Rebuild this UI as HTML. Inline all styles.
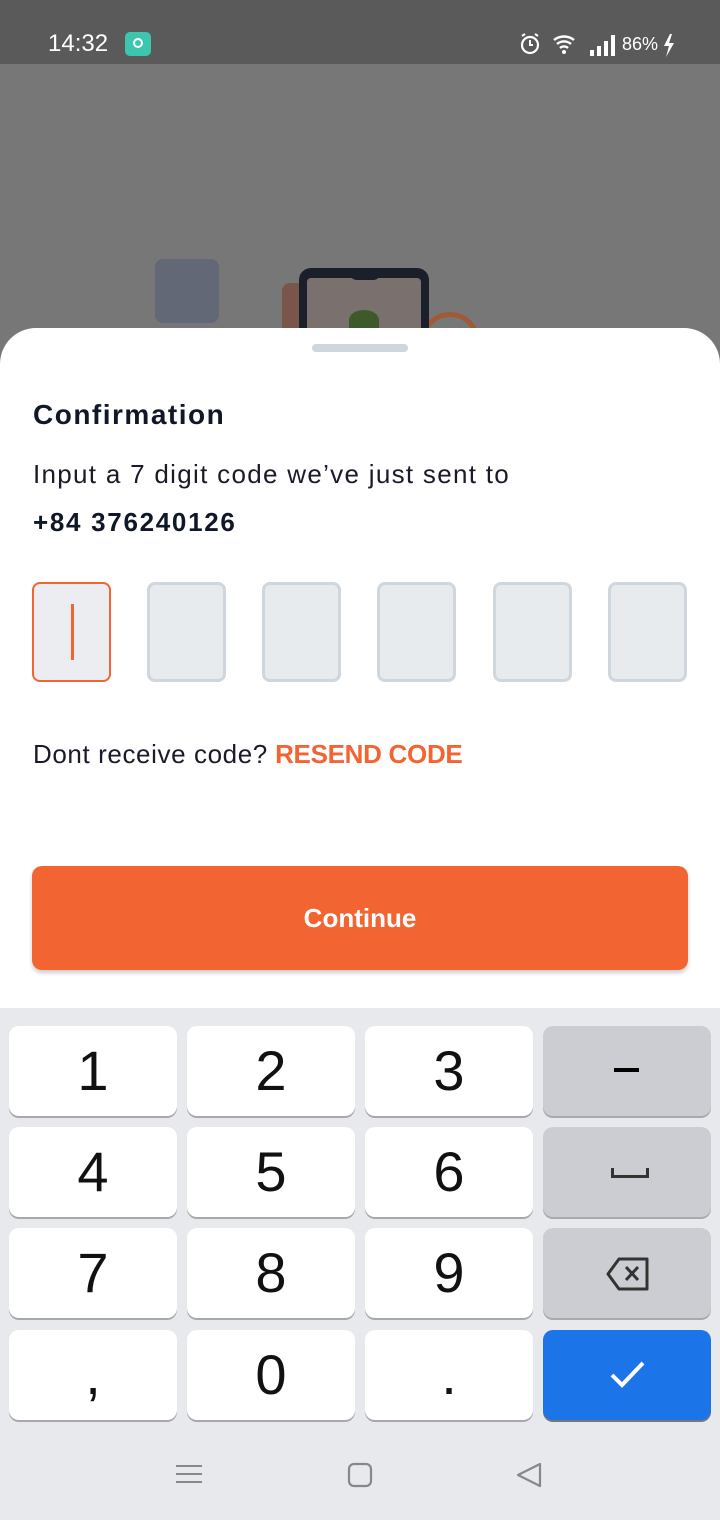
<!DOCTYPE html>
<html><head><meta charset="utf-8"><style>
*{margin:0;padding:0;box-sizing:border-box}
body{width:720px;height:1520px;position:relative;overflow:hidden;font-family:"Liberation Sans",Roboto,sans-serif;background:#777}
.sb{position:absolute;top:0;left:0;width:720px;height:64px;background:#5a5a5a;color:#fff}
.sheet{position:absolute;top:328px;left:0;width:720px;height:700px;background:#fff;border-radius:36px 36px 0 0}
.kb{position:absolute;top:1008px;left:0;width:720px;height:512px;background:#e8e9ed}
.k{position:absolute;width:168px;height:90px;background:#fff;border-radius:10px;box-shadow:0 2px 0 #a8a9ad;font-size:56px;text-align:center;line-height:90px;color:#111}
.g{background:#cbcdd2}
.box{position:absolute;top:582px;width:79px;height:100px;border:3px solid #cfd6de;background:#e8ebee;border-radius:8px}
</style></head><body>
<div class="sb">
<div style="position:absolute;left:48px;top:30px;font-size:24px">14:32</div>
<div style="position:absolute;left:125px;top:32px;width:26px;height:24px;background:#3cc6b0;border-radius:5px"><div style="position:absolute;left:8px;top:6px;width:10px;height:10px;border:2px solid #fff;border-radius:50%"></div></div>
<svg style="position:absolute;left:518px;top:32px" width="170" height="26" viewBox="0 0 170 26">
<circle cx="12" cy="13" r="8" fill="none" stroke="#fff" stroke-width="2.2"/><path d="M12 8v5h3M4 4l3-2M20 4l-3-2" stroke="#fff" stroke-width="2" fill="none"/>
<path d="M36 8a16 16 0 0 1 20 0M39 12a11 11 0 0 1 14 0M42 16a6 6 0 0 1 8 0" stroke="#fff" stroke-width="2.4" fill="none"/><circle cx="46" cy="20" r="2" fill="#fff"/>
<rect x="72" y="18" width="4" height="6" fill="#fff"/><rect x="79" y="14" width="4" height="10" fill="#fff"/><rect x="86" y="9" width="4" height="15" fill="#fff"/><rect x="93" y="3" width="4" height="21" fill="#fff"/>
<text x="104" y="18" font-size="18" fill="#fff" font-family="Liberation Sans">86%</text>
<path d="M152 2l-6 12h5l-3 11 8-14h-5l3-9z" fill="#fff"/></svg>
</div>
<div style="position:absolute;left:155px;top:259px;width:64px;height:64px;background:#626876;border-radius:8px"></div>
<div style="position:absolute;left:282px;top:283px;width:20px;height:50px;background:#78574a;border-radius:8px 0 0 0"></div>
<div style="position:absolute;left:420px;top:312px;width:60px;height:30px;border:5px solid #a05a35;border-radius:30px 30px 0 0;border-bottom:none"></div>
<div style="position:absolute;left:299px;top:268px;width:130px;height:70px;background:#1b1f29;border-radius:12px"><div style="position:absolute;left:8px;top:10px;width:114px;height:60px;background:#7a706d;border-radius:4px"></div><div style="position:absolute;left:50px;top:0;width:32px;height:12px;background:#1b1f29;border-radius:0 0 8px 8px"></div><div style="position:absolute;left:50px;top:42px;width:30px;height:20px;background:#3e5a2a;border-radius:50% 50% 0 0"></div></div>
<div class="sheet">
<div style="position:absolute;left:312px;top:16px;width:96px;height:8px;background:#cfd6de;border-radius:4px"></div>
<div style="position:absolute;left:33px;top:71px;font-size:28px;font-weight:bold;color:#101828;letter-spacing:1.5px">Confirmation</div>
<div style="position:absolute;left:33px;top:131px;font-size:26px;color:#1a1a2a;letter-spacing:1.3px">Input a 7 digit code we’ve just sent to</div>
<div style="position:absolute;left:33px;top:179px;font-size:26px;font-weight:bold;color:#101828;letter-spacing:1.7px">+84 376240126</div>
<div style="position:absolute;left:33px;top:411px;font-size:26px;color:#1a1a2a"><span style="letter-spacing:0.6px">Dont receive code?</span> <b style="color:#f26532;letter-spacing:-0.3px">RESEND CODE</b></div>
<div style="position:absolute;left:32px;top:538px;width:656px;height:104px;background:#f26532;border-radius:10px;box-shadow:0 3px 4px rgba(0,0,0,.2);color:#fff;font-size:26px;font-weight:bold;text-align:center;line-height:104px">Continue</div>
</div>
<div class="box" style="left:32px;border:2px solid #f26532;border-radius:8px;background:#ebedf0"><div style="position:absolute;left:37px;top:20px;width:3px;height:56px;background:#f26532"></div></div>
<div class="box" style="left:147px"></div><div class="box" style="left:262px"></div><div class="box" style="left:377px"></div><div class="box" style="left:493px"></div><div class="box" style="left:608px"></div>
<div class="kb">
<div class="k" style="left:9px;top:18px">1</div><div class="k" style="left:187px;top:18px">2</div><div class="k" style="left:365px;top:18px">3</div>
<div class="k g" style="left:543px;top:18px"><div style="position:absolute;left:71px;top:42px;width:25px;height:4px;background:#000"></div></div>
<div class="k" style="left:9px;top:119px">4</div><div class="k" style="left:187px;top:119px">5</div><div class="k" style="left:365px;top:119px">6</div>
<div class="k g" style="left:543px;top:119px"><div style="position:absolute;left:68px;top:41px;width:38px;height:10px;border:3px solid #333;border-top:none"></div></div>
<div class="k" style="left:9px;top:220px">7</div><div class="k" style="left:187px;top:220px">8</div><div class="k" style="left:365px;top:220px">9</div>
<div class="k g" style="left:543px;top:220px"><svg style="position:absolute;left:62px;top:28px" width="46" height="36"><path d="M14 3h28v30H14L3 18z" fill="none" stroke="#333" stroke-width="3" stroke-linejoin="round"/><path d="M21 11l12 13M33 11L21 24" stroke="#333" stroke-width="3"/></svg></div>
<div class="k" style="left:9px;top:322px">,</div><div class="k" style="left:187px;top:322px">0</div><div class="k" style="left:365px;top:322px">.</div>
<div class="k" style="left:543px;top:322px;background:#1b74e8;box-shadow:0 2px 0 #777"><svg style="position:absolute;left:66px;top:30px" width="40" height="30"><path d="M3 15l10 10L34 3" stroke="#fff" stroke-width="4" fill="none"/></svg></div>
<svg style="position:absolute;left:174px;top:452px" width="380" height="30"><path d="M2 6h26M2 14h26M2 22h26" stroke="#888" stroke-width="2"/><rect x="175" y="4" width="22" height="22" rx="5" fill="none" stroke="#888" stroke-width="2.2"/><path d="M366 4L344 15l22 11z" fill="none" stroke="#888" stroke-width="2.2" stroke-linejoin="round"/></svg>
</div>
</body></html>
